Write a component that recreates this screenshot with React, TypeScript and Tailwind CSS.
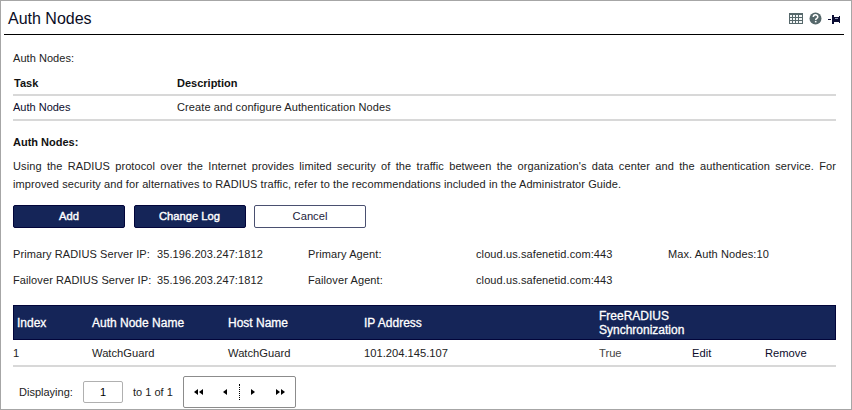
import React from "react";

function GridIcon() {
  return (
    <svg width="14" height="11" viewBox="0 0 14 11" shapeRendering="crispEdges" className="-mt-px">
      <rect x="0" y="0" width="14" height="11" fill="#56686b" />
      {[2, 5, 8].map((y) =>
        [1, 4, 7, 10].map((x) => (
          <rect key={`${x}-${y}`} x={x} y={y} width={x === 10 ? 3 : 2} height="2" fill="#f4f7f7" />
        ))
      )}
    </svg>
  );
}

function HelpIcon() {
  return (
    <svg width="13" height="13" viewBox="0 0 13 13" className="-mt-px">
      <circle cx="6.5" cy="6.5" r="6" fill="#56686b" />
      <path d="M4.3 5.1c0-3 4.5-2.9 4.5-.2 0 1.500-2.100 1.500-2.100 3" fill="none" stroke="#fff" strokeWidth="1.500" />
      <rect x="5.900" y="8.900" width="1.600" height="1.500" fill="#fff" />
    </svg>
  );
}

function PinIcon() {
  return (
    <svg width="13" height="10" viewBox="0 0 13 10" shapeRendering="crispEdges" fill="#0b0d33" className="mt-px">
      <rect x="0" y="4" width="3" height="1" />
      <rect x="4" y="0" width="2" height="9" />
      <rect x="6" y="2" width="5" height="5" />
      <rect x="7" y="3" width="3" height="1" fill="#8f96b5" />
      <rect x="11" y="1" width="1" height="7" />
    </svg>
  );
}

function Arrow({ dir, double }: { dir: "left" | "right"; double?: boolean }) {
  return (
    <svg width={double ? 9 : 4} height="6" viewBox={double ? "0 0 9 6" : "0 0 4 6"} fill="#000" className={dir === "left" ? "" : "-scale-x-100"}>
      <path d="M4 0v6L0 3z" />
      {double && <path d="M9 0v6L5 3z" />}
    </svg>
  );
}

const serverRows = [
  ["Primary RADIUS Server IP:", "35.196.203.247:1812", "Primary Agent:", "cloud.us.safenetid.com:443", "Max. Auth Nodes:10"],
  ["Failover RADIUS Server IP:", "35.196.203.247:1812", "Failover Agent:", "cloud.us.safenetid.com:443", ""],
];

export default function App() {
  return (
    <div className="flex h-[410px] w-[852px] flex-col overflow-hidden border border-[#a6a6a6] bg-white font-['Liberation_Sans',Arial,sans-serif] text-[11px] leading-[13px] text-[#222]">
      <header className="mr-[7px] ml-[3px] flex h-[34px] shrink-0 items-center border-b border-black pl-[4px]">
        <h1 className="mt-[3px] text-[16px] leading-[20px] text-[#0a0c24]">Auth Nodes</h1>
        <div className="mt-[3px] ml-auto flex items-center gap-[6px] pr-[3px]">
          <GridIcon />
          <HelpIcon />
          <PinIcon />
        </div>
      </header>
      <main className="mr-[15px] ml-3 flex flex-col">
        <p className="mt-[17px] h-[13px] tracking-[0.05px]">Auth Nodes:</p>
        <div className="mt-2 grid h-[23px] grid-cols-[164px_1fr] items-center border-b-2 border-[#d8d8d8] font-bold text-[#111]">
          <span className="pl-px">Task</span>
          <span>Description</span>
        </div>
        <div className="grid h-[25px] grid-cols-[164px_1fr] items-center border-b-2 border-[#d8d8d8]">
          <span className="text-[#0c0c2c]">Auth Nodes</span>
          <span className="tracking-[0.1px]">Create and configure Authentication Nodes</span>
        </div>
        <p className="mt-[15px] h-[13px] font-bold text-[#111]">Auth Nodes:</p>
        <p className="mt-[8px] h-[36px] text-justify leading-[18px] tracking-[0.1px]">
          Using the RADIUS protocol over the Internet provides limited security of the traffic between the organization's data center and the authentication service. For improved security and for alternatives to RADIUS traffic, refer to the recommendations included in the Administrator Guide.
        </p>
        <div className="mt-[12px] flex h-[23px] gap-[8.500px] text-[11.2px]">
          <button className="w-[112px] rounded-[2px] border border-[#02053a] bg-[#152558] text-white [-webkit-text-stroke:0.4px_#fff]">Add</button>
          <button className="w-[112px] rounded-[2px] border border-[#02053a] bg-[#152558] text-white [-webkit-text-stroke:0.4px_#fff]">Change Log</button>
          <button className="w-[112px] rounded-[2px] border border-[#4a5070] bg-white text-[#1c1c3c]">Cancel</button>
        </div>
        <div className="mt-[13px] flex flex-col">
          {serverRows.map((row) => (
            <div key={row[0]} className="grid h-[26px] grid-cols-[144px_151px_168px_192px_1fr] items-center whitespace-nowrap">
              {row.map((cell, i) => (
                <span key={i} className="tracking-[0.1px]">{cell}</span>
              ))}
            </div>
          ))}
        </div>
        <div className="mt-[12px] grid h-[35px] grid-cols-[75px_136px_136px_235px_1fr] items-center border border-[#02053a] bg-[#152558] pl-[3px] text-[12px] leading-[14px] text-white [-webkit-text-stroke:0.3px_#fff]">
          <span>Index</span>
          <span>Auth Node Name</span>
          <span>Host Name</span>
          <span>IP Address</span>
          <span>FreeRADIUS<br />Synchronization</span>
        </div>
        <div className="grid h-[27px] grid-cols-[79px_136px_136px_235px_93px_73px_1fr] items-center border-b-2 border-[#d8d8d8] pt-px text-[11.2px]">
          <span>1</span>
          <span>WatchGuard</span>
          <span>WatchGuard</span>
          <span>101.204.145.107</span>
          <span className="text-[#444]">True</span>
          <span className="text-[#0c0c2c]">Edit</span>
          <span className="text-[#0c0c2c]">Remove</span>
        </div>
        <div className="mt-[9px] flex h-[32px] items-center pl-[6px]">
          <span className="w-[64px]">Displaying:</span>
          <span className="mr-[10px] flex h-[22px] w-[40px] items-center justify-center rounded-[2px] border border-[#b0b0b0] text-black">1</span>
          <span className="w-[50px]">to 1 of 1</span>
          <div className="flex h-[32px] w-[113px] items-center rounded-[2px] border border-[#8c8c8c] pl-[10px]">
            <Arrow dir="left" double />
            <span className="w-[20px]" />
            <Arrow dir="left" />
            <span className="mr-[11px] ml-[12px] h-4 border-l border-dotted border-black" />
            <Arrow dir="right" />
            <span className="w-[21px]" />
            <Arrow dir="right" double />
          </div>
        </div>
      </main>
    </div>
  );
}
